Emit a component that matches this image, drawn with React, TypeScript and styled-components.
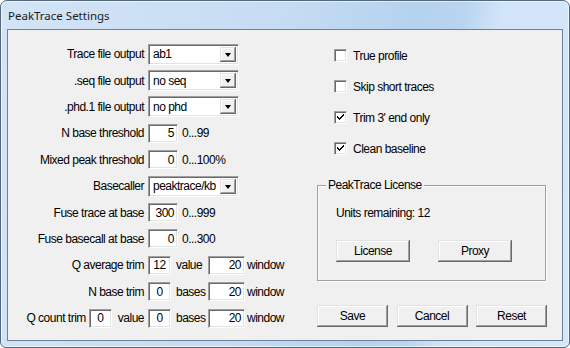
import React from "react";
import styled, { createGlobalStyle } from "styled-components";

const GlobalStyle = createGlobalStyle`
  html, body {
    margin: 0;
    padding: 0;
    background: #ffffff;
  }
  body {
    font-family: "Liberation Sans", Arial, sans-serif;
    font-size: 12px;
    letter-spacing: -0.5px;
    color: #000;
  }
`;

const Window = styled.div`
  width: 570px;
  height: 348px;
  box-sizing: border-box;
  border: 1px solid #55687c;
  border-radius: 7px 7px 6px 6px;
  background: linear-gradient(
    100deg,
    #d3e4f6 0%,
    #c6dcf3 45%,
    #b5d2ee 66%,
    #b9d4ef 74%,
    #d2e5f8 80%,
    #d4e6f8 100%
  );
  box-shadow: inset 0 0 0 1px rgba(255, 255, 255, 0.6);
  display: flex;
  flex-direction: column;
  padding: 0 6px 6px 6px;
`;

const TitleBar = styled.div`
  height: 28px;
  display: flex;
  align-items: center;
  padding-left: 1px;
  font-family: "Noto Sans", "Open Sans", sans-serif;
  font-size: 11.5px;
  letter-spacing: 0;
  color: #1c1c1c;
`;

const Client = styled.div`
  flex: 1;
  display: flex;
  background: #f0f0f0;
  border: 1px solid #6f8194;
`;

const FormColumn = styled.div`
  width: 309px;
  padding-top: 11px;
  display: flex;
  flex-direction: column;
`;

const Row = styled.div`
  height: 26.4px;
  display: flex;
  align-items: center;
`;

const LabelCell = styled.div`
  width: 136px;
  margin-right: 4px;
  display: flex;
  align-items: center;
  justify-content: flex-end;
  white-space: nowrap;
`;

const Label = styled.span<{ $gap?: number }>`
  white-space: nowrap;
  margin-right: ${(p) => p.$gap ?? 0}px;
`;

const Unit = styled.span<{ $w?: number; $ml?: number }>`
  white-space: nowrap;
  margin-left: ${(p) => p.$ml ?? 5}px;
  width: ${(p) => (p.$w ? `${p.$w}px` : "auto")};
`;

const Range = styled.span`
  margin-left: 4px;
  white-space: nowrap;
`;

const sunken = `
  box-sizing: border-box;
  background: #ffffff;
  border-style: solid;
  border-width: 1px;
  border-color: #a0a0a0 #ffffff #ffffff #a0a0a0;
  box-shadow: inset 1px 1px 0 #696969, inset -1px -1px 0 #e3e3e3;
`;

const Field = styled.div<{ $w: number; $align?: string }>`
  ${sunken}
  width: ${(p) => p.$w}px;
  height: 19px;
  display: flex;
  align-items: center;
  justify-content: ${(p) => p.$align ?? "flex-end"};
  padding: 0 3px;
  line-height: 1;
`;

const Combo = styled.div`
  ${sunken}
  width: 91px;
  height: 21px;
  display: flex;
  align-items: stretch;
  padding: 2px;
`;

const ComboText = styled.span`
  flex: 1;
  display: flex;
  align-items: center;
  padding-left: 2px;
`;

const raised = `
  background: #f0f0f0;
  box-shadow: inset -1px -1px 0 #696969, inset 1px 1px 0 #e3e3e3,
    inset -2px -2px 0 #a0a0a0, inset 2px 2px 0 #ffffff;
`;

const ComboButton = styled.span`
  ${raised}
  width: 16px;
  display: flex;
  align-items: center;
  justify-content: center;

  &::after {
    content: "";
    width: 0;
    height: 0;
    border-left: 3.5px solid transparent;
    border-right: 3.5px solid transparent;
    border-top: 4px solid #000;
    margin-top: 1px;
  }
`;

const SideColumn = styled.div`
  flex: 1;
  padding-top: 10px;
  display: flex;
  flex-direction: column;
`;

const CheckRow = styled.label`
  height: 31px;
  display: flex;
  align-items: center;
  padding-left: 17px;
  gap: 6px;
`;

const CheckBox = styled.span`
  box-sizing: border-box;
  width: 13px;
  height: 13px;
  background: #fff;
  border-style: solid;
  border-width: 1px;
  border-color: #a0a0a0 #ffffff #ffffff #a0a0a0;
  box-shadow: inset 1px 1px 0 #696969, inset -1px -1px 0 #e3e3e3;
  display: flex;
  align-items: center;
  justify-content: center;
`;

const Group = styled.div`
  position: relative;
  margin-top: 21px;
  width: 229px;
  height: 96px;
  box-sizing: border-box;
  border: 1px solid #a0a0a0;
  box-shadow: 1px 1px 0 #ffffff, inset 1px 1px 0 #ffffff;
  padding: 20px 0 0 18px;
  display: flex;
  flex-direction: column;
`;

const GroupTitle = styled.span`
  position: absolute;
  top: -8px;
  left: 8px;
  padding: 0 2px;
  background: #f0f0f0;
  line-height: 14px;
`;

const GroupText = styled.div`
  line-height: 14px;
`;

const ButtonRow = styled.div<{ $gap: number; $mt: number }>`
  display: flex;
  gap: ${(p) => p.$gap}px;
  margin-top: ${(p) => p.$mt}px;
`;

const Button = styled.button<{ $w: number }>`
  ${raised}
  width: ${(p) => p.$w}px;
  height: 22px;
  border: none;
  padding: 0;
  font-family: inherit;
  font-size: 12px;
  letter-spacing: -0.5px;
  color: #000;
`;

const Check = () => (
  <svg width="9" height="9" viewBox="0 0 9 9" shapeRendering="crispEdges">
    <path d="M1 3h1v1h1v1h1v-1h1v-1h1v-1h1v-1h1v2h-1v1h-1v1h-1v1h-1v1h-1v-1h-1v-1h-1v-1h-1z" fill="#000" />
  </svg>
);

const Select = ({ value }: { value: string }) => (
  <Combo>
    <ComboText>{value}</ComboText>
    <ComboButton />
  </Combo>
);

const checks = [
  { label: "True profile", on: false },
  { label: "Skip short traces", on: false },
  { label: "Trim 3' end only", on: true },
  { label: "Clean baseline", on: true },
];

export default function App() {
  return (
    <>
      <GlobalStyle />
      <Window>
        <TitleBar>PeakTrace Settings</TitleBar>
        <Client>
          <FormColumn>
            <Row>
              <LabelCell>Trace file output</LabelCell>
              <Select value="ab1" />
            </Row>
            <Row>
              <LabelCell>.seq file output</LabelCell>
              <Select value="no seq" />
            </Row>
            <Row>
              <LabelCell>.phd.1 file output</LabelCell>
              <Select value="no phd" />
            </Row>
            <Row>
              <LabelCell>N base threshold</LabelCell>
              <Field $w={30}>5</Field>
              <Range>0...99</Range>
            </Row>
            <Row>
              <LabelCell>Mixed peak threshold</LabelCell>
              <Field $w={30}>0</Field>
              <Range>0...100%</Range>
            </Row>
            <Row>
              <LabelCell>Basecaller</LabelCell>
              <Select value="peaktrace/kb" />
            </Row>
            <Row>
              <LabelCell>Fuse trace at base</LabelCell>
              <Field $w={30}>300</Field>
              <Range>0...999</Range>
            </Row>
            <Row>
              <LabelCell>Fuse basecall at base</LabelCell>
              <Field $w={30}>0</Field>
              <Range>0...300</Range>
            </Row>
            <Row>
              <LabelCell>Q average trim</LabelCell>
              <Field $w={23} $align="center">12</Field>
              <Unit $w={32}>value</Unit>
              <Field $w={37}>20</Field>
              <Unit $ml={2}>window</Unit>
            </Row>
            <Row>
              <LabelCell>N base trim</LabelCell>
              <Field $w={23} $align="center">0</Field>
              <Unit $w={32}>bases</Unit>
              <Field $w={37}>20</Field>
              <Unit $ml={2}>window</Unit>
            </Row>
            <Row>
              <LabelCell>
                <Label $gap={3}>Q count trim</Label>
                <Field $w={23} $align="center">0</Field>
                <Unit $ml={6}>value</Unit>
              </LabelCell>
              <Field $w={23} $align="center">0</Field>
              <Unit $w={32}>bases</Unit>
              <Field $w={37}>20</Field>
              <Unit $ml={2}>window</Unit>
            </Row>
          </FormColumn>
          <SideColumn>
            {checks.map((c) => (
              <CheckRow key={c.label}>
                <CheckBox>{c.on && <Check />}</CheckBox>
                {c.label}
              </CheckRow>
            ))}
            <Group>
              <GroupTitle>PeakTrace License</GroupTitle>
              <GroupText>Units remaining: 12</GroupText>
              <ButtonRow $gap={28} $mt={20}>
                <Button $w={74}>License</Button>
                <Button $w={74}>Proxy</Button>
              </ButtonRow>
            </Group>
            <ButtonRow $gap={8.5} $mt={24}>
              <Button $w={71}>Save</Button>
              <Button $w={71}>Cancel</Button>
              <Button $w={71}>Reset</Button>
            </ButtonRow>
          </SideColumn>
        </Client>
      </Window>
    </>
  );
}
